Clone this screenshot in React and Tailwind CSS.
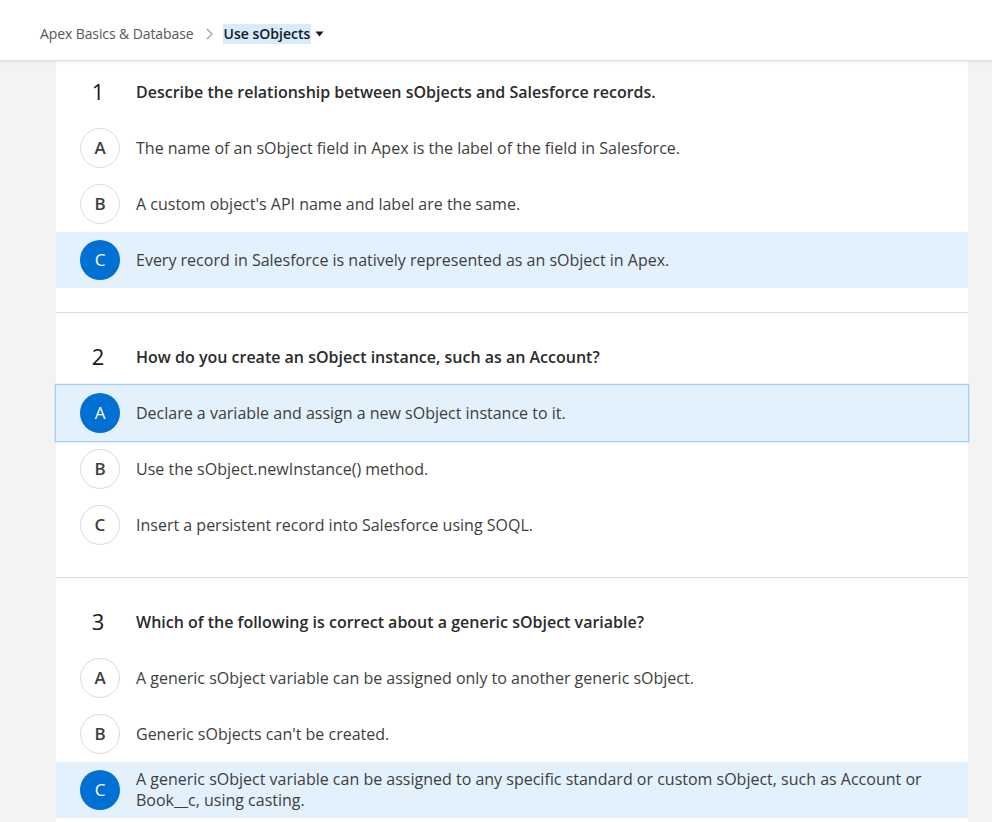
import React from "react";

const questions = [
  {
    n: "1",
    q: "Describe the relationship between sObjects and Salesforce records.",
    opts: [
      { l: "A", t: "The name of an sObject field in Apex is the label of the field in Salesforce." },
      { l: "B", t: "A custom object's API name and label are the same." },
      { l: "C", t: "Every record in Salesforce is natively represented as an sObject in Apex.", sel: "fill" },
    ],
  },
  {
    n: "2",
    q: "How do you create an sObject instance, such as an Account?",
    opts: [
      { l: "A", t: "Declare a variable and assign a new sObject instance to it.", sel: "border" },
      { l: "B", t: "Use the sObject.newInstance() method." },
      { l: "C", t: "Insert a persistent record into Salesforce using SOQL." },
    ],
  },
  {
    n: "3",
    q: "Which of the following is correct about a generic sObject variable?",
    opts: [
      { l: "A", t: "A generic sObject variable can be assigned only to another generic sObject." },
      { l: "B", t: "Generic sObjects can't be created." },
      {
        l: "C",
        t: "A generic sObject variable can be assigned to any specific standard or custom sObject, such as Account or Book__c, using casting.",
        sel: "fill",
      },
    ],
  },
];

function Option({ o }) {
  const selected = !!o.sel;
  const rowCls =
    o.sel === "border"
      ? "bg-[#e3f1fd] border border-[#a6cdf0] shadow-[0_0_2px_rgba(0,112,210,0.25)] -mx-px h-[58px] -my-px relative"
      : o.sel === "fill"
      ? "bg-[#e3f1fd] h-[56px]"
      : "h-[56px]";
  return (
    <div className={`flex items-center ${rowCls}`}>
      <div className="pl-[24px] pr-[16px] shrink-0">
        {selected ? (
          <div className="w-[40px] h-[40px] rounded-full bg-[#0070d2] text-white flex items-center justify-center text-[17px]">
            {o.l}
          </div>
        ) : (
          <div className="w-[40px] h-[40px] rounded-full border border-[#dddbda] bg-white text-[#3e3e3c] font-semibold flex items-center justify-center text-[17px]">
            {o.l}
          </div>
        )}
      </div>
      <div className="text-[16px] leading-[21px] text-[#3e3e3c] pr-[34px]">{o.t}</div>
    </div>
  );
}

function Question({ q, first }) {
  return (
    <div className={`border-b border-[#dddbda] pb-[24px] ${first ? "pt-[2px]" : "pt-[15px]"}`}>
      <div className="flex items-center h-[57px]">
        <div className="w-[80px] shrink-0 text-center text-[22px] text-[#181818] pl-[4px]">{q.n}</div>
        <div className="text-[16px] font-semibold text-[#2b2b2b]">{q.q}</div>
      </div>
      {q.opts.map((o) => (
        <Option key={o.l} o={o} />
      ))}
    </div>
  );
}

export default function App() {
  return (
    <div className="h-[822px] overflow-hidden bg-[#f3f3f3]" style={{ fontFamily: "'Open Sans', 'Noto Sans', sans-serif" }}>
      <div className="h-[61px] bg-white border-b border-[#e0e0e0] shadow-[0_1px_3px_rgba(0,0,0,0.08)] flex items-center pl-[40px] pt-[7px] relative z-10">
        <span className="text-[14px] text-[#54585c] tracking-[-0.1px]">Apex Basics &amp; Database</span>
        <svg width="10" height="14" viewBox="0 0 10 14" className="ml-[11px] mr-[8px]">
          <path d="M2 2 L7 7 L2 12" fill="none" stroke="#a0a0a0" strokeWidth="1.3" />
        </svg>
        <span className="text-[14px] font-semibold text-[#16181a] bg-[#d6ebfc] px-[1px] h-[20px] leading-[20px]">Use sObjects</span>
        <svg width="9" height="6" viewBox="0 0 9 6" className="ml-[4px] mt-[1px]">
          <path d="M0.5 0.5 L8.5 0.5 L4.5 5.5 Z" fill="#16181a" />
        </svg>
      </div>
      <div className="ml-[56px] mr-[24px] bg-white">
        {questions.map((q, i) => (
          <Question key={q.n} q={q} first={i === 0} />
        ))}
      </div>
    </div>
  );
}
